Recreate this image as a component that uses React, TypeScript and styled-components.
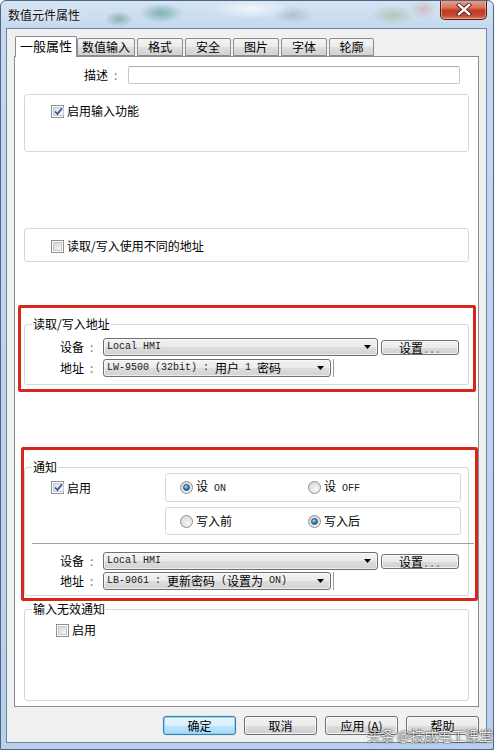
import React from 'react';
import styled, { createGlobalStyle } from 'styled-components';

const GlobalStyle = createGlobalStyle`
  html, body { margin: 0; padding: 0; background: #fff; }
  body { font-family: "Noto Sans CJK SC", "Noto Sans", sans-serif; font-size: 12px; color: #000; }
  * { box-sizing: border-box; }
`;

const Window = styled.div`
  position: relative;
  width: 494px;
  height: 750px;
  display: flex;
  flex-direction: column;
  border: 1px solid #4e6683;
  border-radius: 6px 6px 0 0;
  overflow: hidden;
  background:
    radial-gradient(ellipse 22px 10px at 160px 12px, rgba(60,140,120,0.55), transparent),
    radial-gradient(ellipse 14px 8px at 118px 18px, rgba(70,120,100,0.45), transparent),
    radial-gradient(ellipse 40px 10px at 250px 8px, rgba(255,255,255,0.7), transparent),
    radial-gradient(ellipse 20px 9px at 292px 14px, rgba(120,140,150,0.35), transparent),
    radial-gradient(ellipse 22px 10px at 392px 14px, rgba(150,170,110,0.45), transparent),
    radial-gradient(ellipse 14px 10px at 422px 8px, rgba(210,140,130,0.4), transparent),
    linear-gradient(180deg, #d5e4f3 0px, #c4d8ee 28px, #b9d0ea 100%);
`;

const TitleBar = styled.div`
  height: 27px;
  display: flex;
  align-items: flex-start;
  justify-content: space-between;
`;

const TitleText = styled.div`
  padding: 6px 0 0 7px;
  font-size: 12px;
  line-height: 15px;
  color: #111;
  text-shadow: 0 0 6px rgba(255,255,255,0.9);
`;

const CloseButton = styled.div`
  width: 47px;
  height: 20px;
  margin: -1px 6px 0 0;
  border: 1px solid #4a2219;
  border-top: none;
  border-radius: 0 0 5px 5px;
  background: linear-gradient(180deg, #e9a48f 0%, #d7735b 40%, #c23a22 55%, #c8462a 80%, #dc7a55 100%);
  box-shadow: inset 0 0 0 1px rgba(255,220,200,0.45);
  display: flex;
  align-items: center;
  justify-content: center;
`;

const Client = styled.div`
  flex: 1;
  margin: 0 6px 6px 5px;
  border: 1px solid #6c84a0;
  background: #f0f0f0;
  display: flex;
  flex-direction: column;
  padding: 7px 7px 0 7px;
`;

const TabRow = styled.div`
  height: 20px;
  display: flex;
  align-items: flex-end;
  padding-left: 1px;
  position: relative;
  z-index: 1;
`;

const Tab = styled.div<{ $active?: boolean; $w: number; $gap?: number }>`
  width: ${p => p.$w}px;
  margin-left: ${p => p.$gap ?? 0}px;
  height: ${p => (p.$active ? 21 : 18)}px;
  margin-bottom: ${p => (p.$active ? -1 : 0)}px;
  border: 1px solid #898c95;
  border-bottom: ${p => (p.$active ? 'none' : '1px solid #898c95')};
  border-radius: 2px 2px 0 0;
  background: ${p =>
    p.$active ? '#fff' : 'linear-gradient(180deg, #f3f3f3 0%, #ebebeb 50%, #dedede 51%, #d3d3d3 100%)'};
  font-size: ${p => (p.$active ? 13 : 12)}px;
  line-height: ${p => (p.$active ? 18 : 15)}px;
  text-align: center;
  color: #000;
`;

const Panel = styled.div`
  flex: 1;
  border: 1px solid #898c95;
  background: #fff;
  display: flex;
  flex-direction: column;
  padding: 0 9px 5px 9px;
`;

const DescRow = styled.div`
  margin-top: 9px;
  height: 18px;
  display: flex;
  align-items: center;
  padding-left: 60px;
`;

const DescLabel = styled.div`
  width: 36px;
  margin-right: 8px;
  white-space: nowrap;
  line-height: 14px;
`;

const Colon = styled.span`
  color: #777;
  margin-left: 6px;
`;

const TextInput = styled.div`
  width: 332px;
  height: 18px;
  border: 1px solid #c5c9cf;
  border-top-color: #abadb3;
  border-radius: 2px;
  background: #fff;
`;

const Frame = styled.fieldset<{ $top?: number; $h?: number; $grow?: boolean; $pb?: number }>`
  margin: ${p => p.$top ?? 0}px 0 0 0;
  padding: 0 0 ${p => p.$pb ?? 0}px 0;
  min-width: 0;
  border: 1px solid #d5d9de;
  border-radius: 3px;
  ${p => (p.$h ? `height: ${p.$h}px;` : '')}
  ${p => (p.$grow ? 'flex: 1;' : '')}
  display: flex;
  flex-direction: column;
`;

const Legend = styled.legend`
  margin-left: 7px;
  padding: 0 1px;
  font-size: 12px;
  line-height: 12px;
  color: #000;
`;

const CheckRow = styled.div<{ $pt?: number; $pl: number; $center?: boolean }>`
  display: flex;
  align-items: center;
  gap: 3px;
  padding-left: ${p => p.$pl}px;
  padding-top: ${p => p.$pt ?? 0}px;
  ${p => (p.$center ? 'flex: 1;' : '')}
  line-height: 14px;
  white-space: nowrap;
`;

const CheckBoxBox = styled.span`
  width: 13px;
  height: 13px;
  flex: none;
  border: 1px solid #8e8f8f;
  background: #fff;
  padding: 1px;
  display: inline-flex;
`;

const CheckInner = styled.span<{ $checked?: boolean }>`
  flex: 1;
  border: 1px solid ${p => (p.$checked ? '#c4cbd6' : '#c9c9c9')};
  background: ${p =>
    p.$checked
      ? 'linear-gradient(135deg, #d9dfe9 0%, #f4f6fa 100%)'
      : 'linear-gradient(135deg, #d6d6d6 0%, #f6f6f6 100%)'};
  display: inline-flex;
  align-items: center;
  justify-content: center;
`;

function CheckBox({ checked }: { checked?: boolean }) {
  return (
    <CheckBoxBox>
      <CheckInner $checked={checked}>
        {checked && (
          <svg width="9" height="9" viewBox="0 0 9 9">
            <path d="M1 4.5 L3.4 7 L8 1.2" stroke="#3b4f86" strokeWidth="1.7" fill="none" />
          </svg>
        )}
      </CheckInner>
    </CheckBoxBox>
  );
}

const RedFrame = styled.div<{ $top: number; $l: number; $r: number; $pb: number }>`
  margin: ${p => p.$top}px -${p => p.$r}px 0 -${p => p.$l}px;
  padding: 0 ${p => p.$r - 3}px ${p => p.$pb}px ${p => p.$l - 3}px;
  border: 3px solid #d8261c;
  border-radius: 2px;
  display: flex;
  flex-direction: column;
`;

const AddrRows = styled.div<{ $pt: number; $gap: number; $pb: number }>`
  display: flex;
  flex-direction: column;
  gap: ${p => p.$gap}px;
  padding: ${p => p.$pt}px 0 ${p => p.$pb}px 35px;
`;

const AddrRow = styled.div`
  height: 18px;
  display: flex;
  align-items: center;
`;

const AddrLabel = styled.div`
  width: 39px;
  margin-right: 4px;
  white-space: nowrap;
  line-height: 14px;
`;

const Combo = styled.div<{ $w: number }>`
  width: ${p => p.$w}px;
  height: 18px;
  border: 1px solid #707070;
  border-radius: 3px;
  background: linear-gradient(180deg, #f2f2f2 0%, #ebebeb 50%, #dddddd 51%, #d2d2d2 100%);
  box-shadow: inset 0 0 0 1px rgba(255,255,255,0.6);
  display: flex;
  align-items: center;
  padding: 0 6px 0 3px;
  white-space: nowrap;
`;

const ComboText = styled.div`
  flex: 1;
  display: flex;
  align-items: center;
  line-height: 14px;
`;

const Latin = styled.span`
  font-family: "Liberation Mono", "DejaVu Sans Mono", monospace;
  font-size: 10px;
  white-space: pre;
  color: #1a1a1a;
`;

const Han = styled.span`
  font-family: "Noto Sans CJK SC", sans-serif;
  font-size: 12px;
`;

const isCJK = (c: string) => /[\u3000-\u9fff\uff00-\uffef]/.test(c);

function Mixed({ text }: { text: string }) {
  const runs: { cjk: boolean; s: string }[] = [];
  for (const ch of text) {
    const c = isCJK(ch);
    const last = runs[runs.length - 1];
    if (last && last.cjk === c) last.s += ch;
    else runs.push({ cjk: c, s: ch });
  }
  return (
    <>
      {runs.map((r, i) => (r.cjk ? <Han key={i}>{r.s}</Han> : <Latin key={i}>{r.s}</Latin>))}
    </>
  );
}

function Arrow() {
  return (
    <svg width="7" height="4" viewBox="0 0 7 4">
      <path d="M0 0 H7 L3.5 4 Z" fill="#000" />
    </svg>
  );
}

const SetButton = styled.div`
  width: 78px;
  height: 15px;
  margin-left: 3px;
  border: 1px solid #707070;
  border-radius: 3px;
  background: linear-gradient(180deg, #f2f2f2 0%, #ebebeb 50%, #dddddd 51%, #cfcfcf 100%);
  box-shadow: inset 0 0 0 1px rgba(255,255,255,0.7);
  font-size: 12px;
  line-height: 13px;
  text-align: center;
`;

const Dots = styled.span`
  color: #666;
  font-family: "Liberation Mono", monospace;
  font-size: 10px;
`;

const StubLine = styled.div`
  width: 1px;
  height: 18px;
  margin-left: 2px;
  background: #9a9a9a;
`;

const NotifyTop = styled.div`
  display: flex;
`;

const CheckCell = styled.div`
  width: 140px;
  height: 29px;
  display: flex;
`;

const RadioCol = styled.div`
  width: 296px;
  display: flex;
  flex-direction: column;
  gap: 5px;
`;

const RadioBox = styled.div<{ $h: number }>`
  height: ${p => p.$h}px;
  border: 1px solid #d5d9de;
  border-radius: 3px;
  display: flex;
  align-items: center;
  padding-left: 14px;
`;

const RadioItem = styled.div<{ $w?: number }>`
  width: ${p => (p.$w ? `${p.$w}px` : 'auto')};
  display: flex;
  align-items: center;
  gap: 3px;
  line-height: 14px;
  white-space: nowrap;
`;

const RadioCircle = styled.span`
  width: 13px;
  height: 13px;
  flex: none;
  border-radius: 50%;
  border: 1px solid #8e8f8f;
  background: radial-gradient(circle at 65% 70%, #f7f7f7 0%, #dcdcdc 70%, #c8c8c8 100%);
  display: inline-flex;
  align-items: center;
  justify-content: center;
`;

const RadioDot = styled.span`
  width: 7px;
  height: 7px;
  border-radius: 50%;
  border: 1px solid #1b4f7a;
  background: radial-gradient(circle at 35% 30%, #b8e4fb 0%, #3b8fd0 45%, #124b7e 100%);
`;

function Radio({ checked, label, w }: { checked?: boolean; label: string; w?: number }) {
  return (
    <RadioItem $w={w}>
      <RadioCircle>{checked && <RadioDot />}</RadioCircle>
      <span>
        <Mixed text={label} />
      </span>
    </RadioItem>
  );
}

const Separator = styled.div`
  height: 1px;
  margin: 8px -6px 0 7px;
  background: #a0a0a0;
`;

const ButtonRow = styled.div`
  display: flex;
  justify-content: flex-end;
  gap: 8px;
  padding: 9px 0 7px 0;
`;

const DlgButton = styled.div<{ $default?: boolean }>`
  width: 73px;
  height: 19px;
  border-radius: 3px;
  border: 1px solid ${p => (p.$default ? '#3c7fb1' : '#707070')};
  background: ${p =>
    p.$default
      ? 'linear-gradient(180deg, #eaf6fd 0%, #d9f0fc 50%, #bee6fd 51%, #a7d9f5 100%)'
      : 'linear-gradient(180deg, #f2f2f2 0%, #ebebeb 50%, #dddddd 51%, #cfcfcf 100%)'};
  box-shadow: ${p =>
    p.$default ? 'inset 0 0 0 1px #8ed3f5, 0 0 1px #48b4e8' : 'inset 0 0 0 1px rgba(255,255,255,0.7)'};
  font-size: 12px;
  line-height: 17px;
  text-align: center;
  white-space: nowrap;
`;

const Underline = styled.span`
  text-decoration: underline;
`;

const Watermark = styled.div`
  position: absolute;
  left: 366px;
  top: 725px;
  font-size: 14px;
  line-height: 18px;
  color: rgba(255, 255, 255, 0.92);
  text-shadow: 0 0 2px rgba(0, 0, 0, 0.75), 0 0 1px rgba(0, 0, 0, 0.8);
  white-space: nowrap;
  letter-spacing: -0.3px;
`;

const tabs = [
  { t: '一般属性', w: 62, g: 0, active: true },
  { t: '数值输入', w: 58, g: 0 },
  { t: '格式', w: 46, g: 2 },
  { t: '安全', w: 46, g: 2 },
  { t: '图片', w: 46, g: 2 },
  { t: '字体', w: 46, g: 2 },
  { t: '轮廓', w: 45, g: 2 },
];

export default function App() {
  return (
    <>
      <GlobalStyle />
      <Window>
        <TitleBar>
          <TitleText>数值元件属性</TitleText>
          <CloseButton>
            <svg width="16" height="13" viewBox="0 0 16 13">
              <path d="M3 2 L13 11 M13 2 L3 11" stroke="#4a1a12" strokeWidth="4.2" strokeLinecap="square" />
              <path d="M3 2 L13 11 M13 2 L3 11" stroke="#ffffff" strokeWidth="2.4" strokeLinecap="square" />
            </svg>
          </CloseButton>
        </TitleBar>
        <Client>
          <TabRow>
            {tabs.map(t => (
              <Tab key={t.t} $w={t.w} $gap={t.g} $active={t.active}>
                {t.t}
              </Tab>
            ))}
          </TabRow>
          <Panel>
            <DescRow>
              <DescLabel>
                描述<Colon>:</Colon>
              </DescLabel>
              <TextInput />
            </DescRow>

            <Frame $top={10} $h={58}>
              <CheckRow $pl={26} $pt={9}>
                <CheckBox checked />
                <span>启用输入功能</span>
              </CheckRow>
            </Frame>

            <Frame $top={76} $h={34}>
              <CheckRow $pl={26} $pt={10}>
                <CheckBox />
                <span>读取/写入使用不同的地址</span>
              </CheckRow>
            </Frame>

            <RedFrame $top={43} $l={6} $r={7} $pb={4}>
              <Frame $top={10}>
                <Legend>读取/写入地址</Legend>
                <AddrRows $pt={8} $gap={3} $pb={7}>
                  <AddrRow>
                    <AddrLabel>
                      设备<Colon>:</Colon>
                    </AddrLabel>
                    <Combo $w={275}>
                      <ComboText>
                        <Mixed text="Local HMI" />
                      </ComboText>
                      <Arrow />
                    </Combo>
                    <SetButton>
                      设置<Dots>...</Dots>
                    </SetButton>
                  </AddrRow>
                  <AddrRow>
                    <AddrLabel>
                      地址<Colon>:</Colon>
                    </AddrLabel>
                    <Combo $w={228}>
                      <ComboText>
                        <Mixed text="LW-9500 (32bit) : 用户 1 密码" />
                      </ComboText>
                      <Arrow />
                    </Combo>
                    <StubLine />
                  </AddrRow>
                </AddrRows>
              </Frame>
            </RedFrame>

            <RedFrame $top={55} $l={3} $r={9} $pb={2}>
              <Frame $top={11} $pb={5}>
                <Legend>通知</Legend>
                <NotifyTop>
                  <CheckCell>
                    <CheckRow $pl={26} $center>
                      <CheckBox checked />
                      <span>启用</span>
                    </CheckRow>
                  </CheckCell>
                  <RadioCol>
                    <RadioBox $h={29}>
                      <Radio checked label="设 ON" w={128} />
                      <Radio label="设 OFF" />
                    </RadioBox>
                    <RadioBox $h={28}>
                      <Radio label="写入前" w={128} />
                      <Radio checked label="写入后" />
                    </RadioBox>
                  </RadioCol>
                </NotifyTop>
                <Separator />
                <AddrRows $pt={8} $gap={2} $pb={0}>
                  <AddrRow>
                    <AddrLabel>
                      设备<Colon>:</Colon>
                    </AddrLabel>
                    <Combo $w={275}>
                      <ComboText>
                        <Mixed text="Local HMI" />
                      </ComboText>
                      <Arrow />
                    </Combo>
                    <SetButton>
                      设置<Dots>...</Dots>
                    </SetButton>
                  </AddrRow>
                  <AddrRow>
                    <AddrLabel>
                      地址<Colon>:</Colon>
                    </AddrLabel>
                    <Combo $w={228}>
                      <ComboText>
                        <Mixed text="LB-9061 : 更新密码 (设置为 ON)" />
                      </ComboText>
                      <Arrow />
                    </Combo>
                    <StubLine />
                  </AddrRow>
                </AddrRows>
              </Frame>
            </RedFrame>

            <Frame $top={2} $grow>
              <Legend>输入无效通知</Legend>
              <CheckRow $pl={31} $pt={8}>
                <CheckBox />
                <span>启用</span>
              </CheckRow>
            </Frame>
          </Panel>
          <ButtonRow>
            <DlgButton $default>确定</DlgButton>
            <DlgButton>取消</DlgButton>
            <DlgButton>
              应用 (<Underline>A</Underline>)
            </DlgButton>
            <DlgButton>帮助</DlgButton>
          </ButtonRow>
        </Client>
        <Watermark>头条 @技成电工课堂</Watermark>
      </Window>
    </>
  );
}
